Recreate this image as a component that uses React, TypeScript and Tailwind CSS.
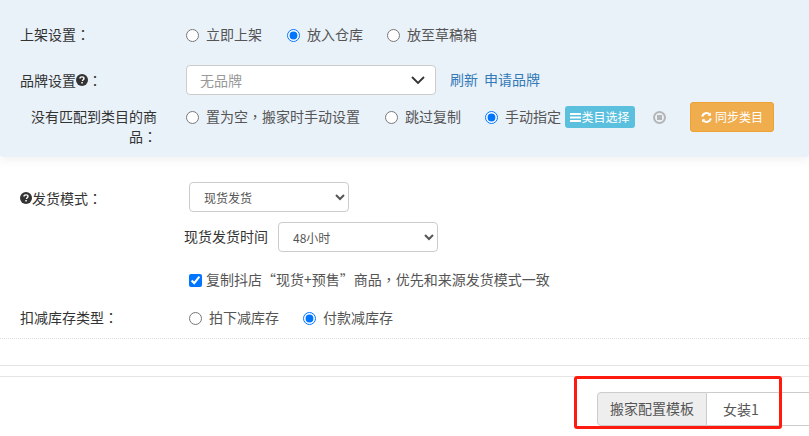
import React from 'react';

const font = { fontFamily: '"Noto Sans CJK SC", "Liberation Sans", sans-serif' };

function Radio({ label, checked, name, className }: { label: React.ReactNode; checked?: boolean; name: string; className?: string }) {
  return (
    <label className={`flex items-center ${className ?? ''}`}>
      <input type="radio" name={name} defaultChecked={checked} className="m-0 w-[13px] h-[13px] accent-[#0075ff]" />
      <span className="ml-[7px] pb-[2px] text-[14px] leading-[18px] text-[#555]">{label}</span>
    </label>
  );
}

// full-width punctuation sits in the middle of its box in the reference
function Mark({ children }: { children: string }) {
  return <span className="[font-family:'Noto_Sans_CJK_TC',sans-serif]">{children}</span>;
}

function Help() {
  return (
    <svg width="12" height="12" viewBox="0 0 12 12" className="shrink-0">
      <circle cx="6" cy="6" r="6" fill="#333" />
      <path d="M4 4.6C4 3.5 4.9 2.9 6 2.9s2 .6 2 1.6c0 1.3-1.5 1.3-1.5 2.5" stroke="#fff" strokeWidth="1.4" fill="none" />
      <rect x="5.3" y="8" width="1.5" height="1.5" fill="#fff" />
    </svg>
  );
}

export default function App() {
  return (
    <div className="w-[809px] h-[436px] overflow-hidden bg-white relative [text-spacing-trim:space-all]" style={font}>
      <div className="h-[157px] bg-[#e9f1f9] shadow-[0_4px_10px_rgba(0,0,0,0.05)] rounded-b-[3px] pt-[25px] pl-[20px]">
        <div className="flex items-center h-[20px]">
          <div className="w-[166px] pb-[2px] text-[14px] text-[#333]">上架设置<Mark>：</Mark></div>
          <Radio name="shelf" label="立即上架" className="mr-[25px]" />
          <Radio name="shelf" label="放入仓库" checked className="mr-[24px]" />
          <Radio name="shelf" label="放至草稿箱" />
        </div>
        <div className="flex items-center h-[30px] mt-[20px]">
          <div className="w-[166px] flex items-center text-[14px] text-[#333]">品牌设置<Help /><Mark>：</Mark></div>
          <div className="w-[250px] h-[30px] bg-white border border-[#ccc] rounded-[4px] flex items-center justify-between pl-[13px] pr-[10px]">
            <span className="text-[14px] text-[#999]">无品牌</span>
            <svg width="14" height="8" viewBox="0 0 14 8"><path d="M1 1l6 6 6-6" stroke="#333" strokeWidth="1.8" fill="none" /></svg>
          </div>
          <a className="ml-[14px] pb-[2px] text-[14px] text-[#337ab7]">刷新</a>
          <a className="ml-[6px] pb-[2px] text-[14px] text-[#337ab7]">申请品牌</a>
        </div>
        <div className="flex mt-[7px]">
          <div className="w-[137px] mr-[29px] text-right text-[14px] leading-[20px] text-[#333] pt-[4px]">没有匹配到类目的商<br />品<Mark>：</Mark></div>
          <div className="flex items-center h-[30px]">
            <Radio name="match" label={<>置为空<Mark>，</Mark>搬家时手动设置</>} className="mr-[25px]" />
            <Radio name="match" label="跳过复制" className="mr-[24px]" />
            <Radio name="match" label="手动指定" checked />
            <span className="ml-[4px] h-[22px] w-[70px] rounded-[3px] bg-[#5bc0de] text-white text-[12px] flex items-center justify-center">
              <svg width="11" height="9" viewBox="0 0 11 9" className="shrink-0"><path d="M0 1h11M0 4.5h11M0 8h11" stroke="#fff" strokeWidth="1.8" /></svg>
              类目选择
            </span>
            <svg width="13" height="13" viewBox="0 0 13 13" className="ml-[18px]">
              <circle cx="6.5" cy="6.5" r="5.5" fill="none" stroke="#b5b5b5" strokeWidth="2" />
              <rect x="4" y="4" width="5" height="5" fill="#b5b5b5" />
            </svg>
            <button className="ml-[24px] w-[84px] h-[30px] rounded-[3px] bg-[#f0ad4e] border border-[#eea236] text-white text-[12px] flex items-center justify-center gap-[3px]">
              <svg width="11" height="11" viewBox="0 0 12 12" fill="none" stroke="#fff" strokeWidth="2.2">
                <path d="M1.4 5A4.6 4.6 0 0 1 9.6 3" />
                <path d="M10.6 7A4.6 4.6 0 0 1 2.4 9" />
                <path d="M10.8 .6v3.6H7.2z" fill="#fff" stroke="none" />
                <path d="M1.2 11.4V7.8h3.6z" fill="#fff" stroke="none" />
              </svg>
              同步类目
            </button>
          </div>
        </div>
      </div>

      <div className="flex items-center mt-[25px] pl-[20px]">
        <div className="w-[169px] pt-[2px] flex items-center text-[14px] text-[#333]"><Help />发货模式<Mark>：</Mark></div>
        <select defaultValue="a" className="w-[160px] h-[30px] bg-white border border-[#ccc] rounded-[4px] pl-[10px] text-[12px] text-[#555]">
          <option value="a">现货发货</option>
        </select>
      </div>
      <div className="flex items-center mt-[10px] ml-[184px]">
        <span className="pb-[2px] text-[14px] text-[#333]">现货发货时间</span>
        <select defaultValue="a" className="ml-[10px] w-[160px] h-[30px] bg-white border border-[#ccc] rounded-[4px] pl-[10px] text-[12px] text-[#555]">
          <option value="a">48小时</option>
        </select>
      </div>
      <label className="flex items-center mt-[18px] ml-[189px] h-[20px]">
        <input type="checkbox" defaultChecked className="m-0 w-[13px] h-[13px] accent-[#0075ff]" />
        <span className="ml-[4px] pb-[2px] text-[14px] text-[#555]">复制抖店“现货+预售”商品<Mark>，</Mark>优先和来源发货模式一致</span>
      </label>
      <div className="flex items-center mt-[18px] pl-[20px] h-[20px]">
        <div className="w-[169px] pb-[2px] text-[14px] text-[#333]">扣减库存类型<Mark>：</Mark></div>
        <Radio name="stock" label="拍下减库存" className="mr-[24px]" />
        <Radio name="stock" label="付款减库存" checked />
      </div>
      <div className="mt-[10px] border-t border-dotted border-[#ddd]" />
      <div className="mt-[26px] border-t border-[#e5e5e5]" />
      <div className="mt-[10px] border-t border-[#e5e5e5]" />
      <div className="flex mt-[15px] ml-[597px] h-[34px] w-[260px] text-[14px]">
        <div className="w-[110px] pb-[2px] flex items-center justify-center bg-[#eee] border border-[#ccc] rounded-l-[4px] text-[#555]">搬家配置模板</div>
        <div className="flex-1 flex items-center pl-[16px] border border-l-0 border-[#ccc] text-[#555]">女装1</div>
      </div>

      <div className="absolute left-[574px] top-[376px] w-[208px] h-[53px] border-[3px] border-[#ff1a0f] rounded-[3px]" />
    </div>
  );
}
